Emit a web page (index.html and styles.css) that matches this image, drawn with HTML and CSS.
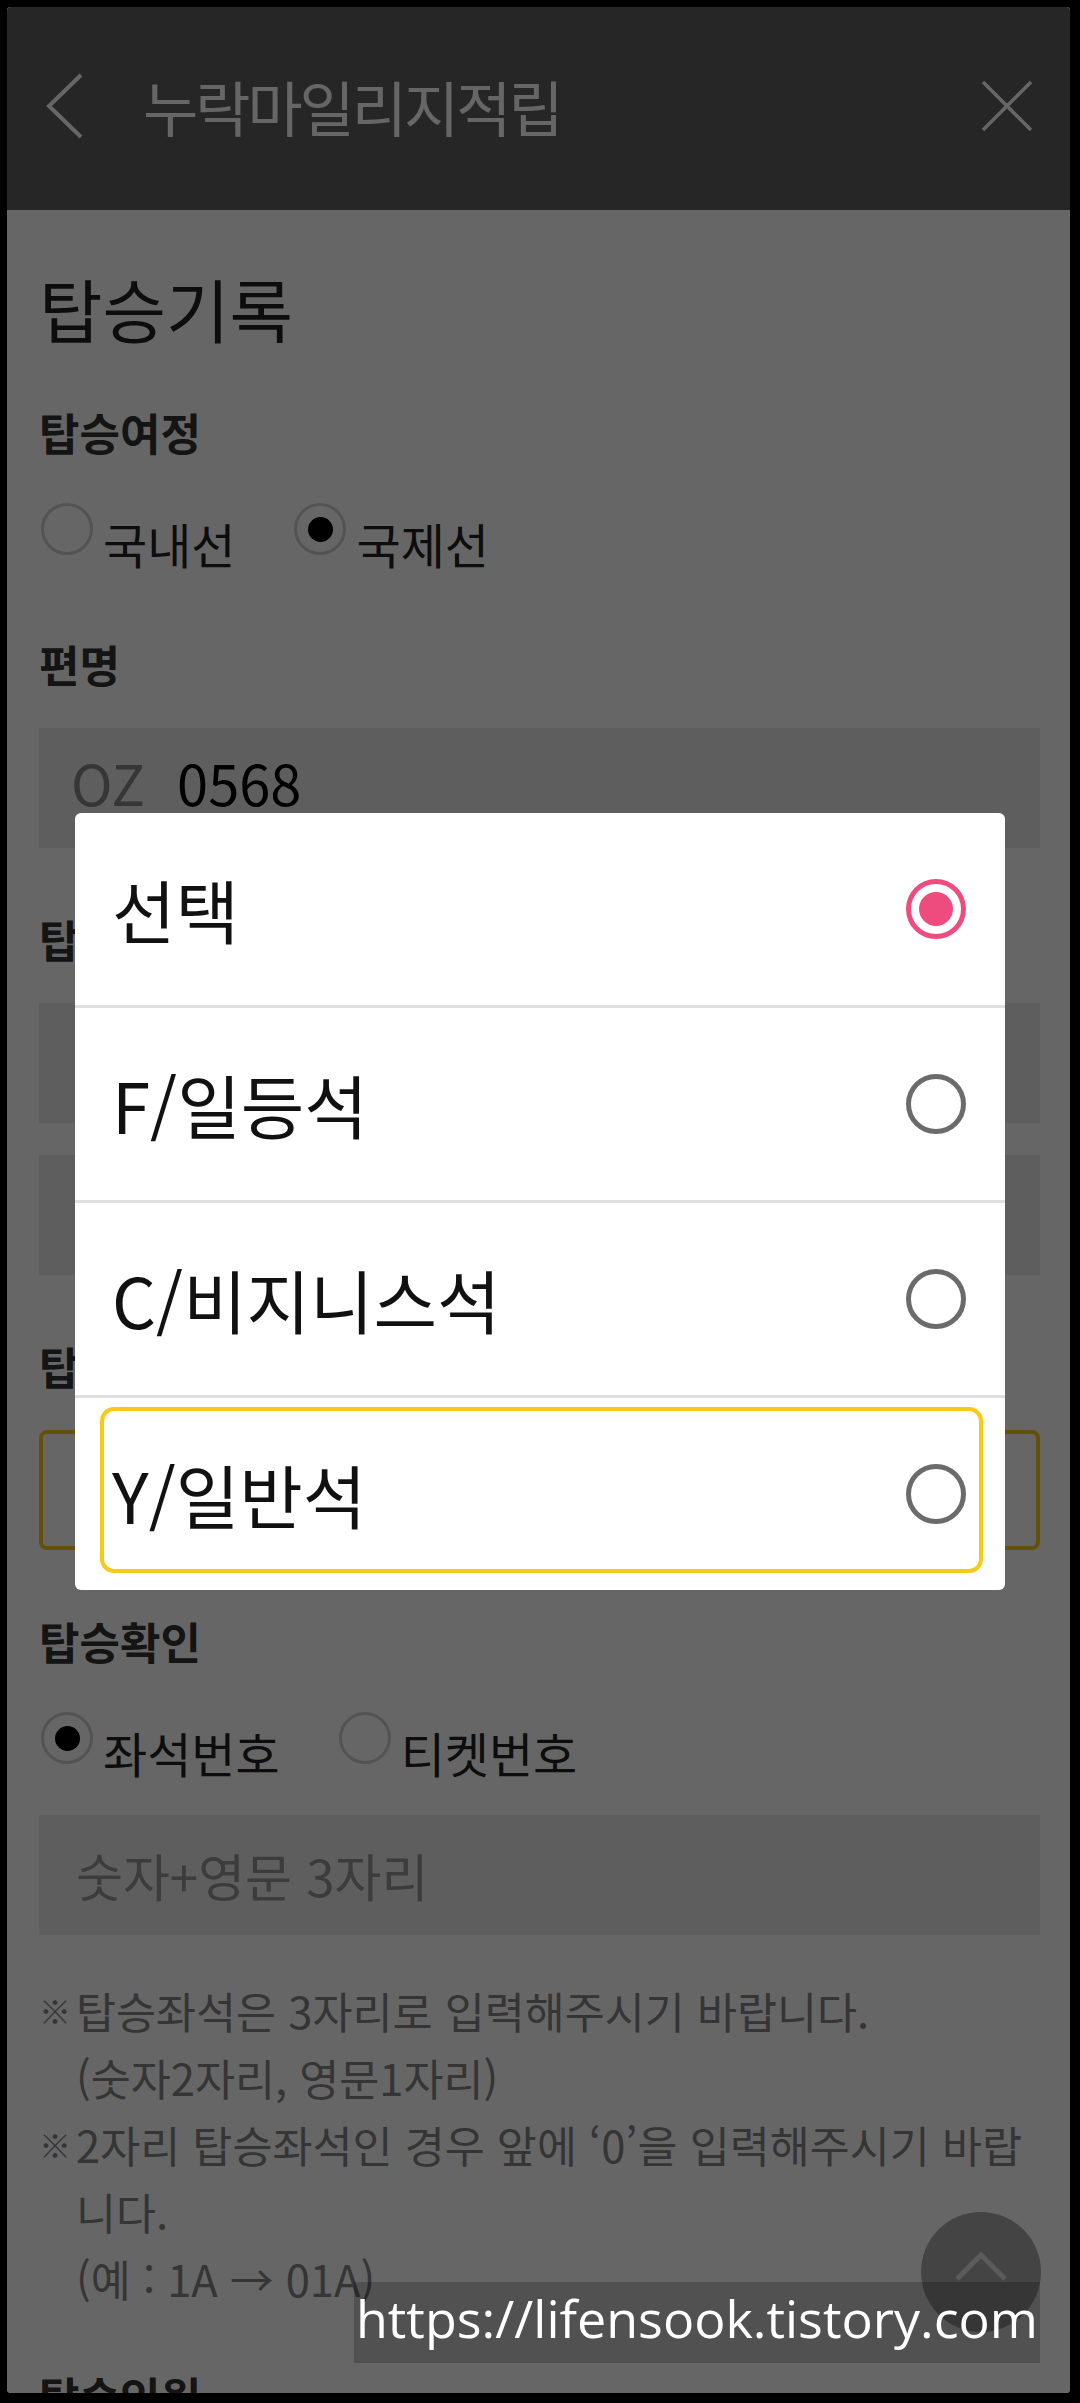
FILE: index.html
```html
<!DOCTYPE html>
<html lang="ko">
<head>
    <meta charset="UTF-8">
    <meta name="viewport" content="width=device-width, initial-scale=1.0">
    <title>누락마일리지적립</title>
    <link rel="stylesheet" href="styles.css">
</head>
<body>
    <div class="screen">
        <header class="appbar">
            <svg class="appbar-back" viewBox="0 0 38 66" width="38" height="66"><polyline points="35,2 3,33 35,64" /></svg>
            <h1 class="appbar-title">누락마일리지적립</h1>
            <svg class="appbar-close" viewBox="0 0 52 52" width="52" height="52"><path d="M2 2L50 50M50 2L2 50" /></svg>
        </header>

        <main class="content">
            <h2 class="page-title">탑승기록</h2>

            <section class="field field-first">
                <h3 class="field-label">탑승여정</h3>
                <div class="radios">
                    <label class="radio"><span class="radio-mark"></span><span class="radio-text">국내선</span></label>
                    <label class="radio checked"><span class="radio-mark"></span><span class="radio-text">국제선</span></label>
                </div>
            </section>

            <section class="field">
                <h3 class="field-label">편명</h3>
                <div class="input input-flight"><span class="input-prefix">OZ</span><span class="input-value">0568</span></div>
            </section>

            <section class="field">
                <h3 class="field-label">탑승구간</h3>
                <div class="input"></div>
                <div class="input input-second"></div>
            </section>

            <section class="field">
                <h3 class="field-label">탑승클래스</h3>
                <div class="select"></div>
            </section>

            <section class="field">
                <h3 class="field-label">탑승확인</h3>
                <div class="radios">
                    <label class="radio checked"><span class="radio-mark"></span><span class="radio-text">좌석번호</span></label>
                    <label class="radio"><span class="radio-mark"></span><span class="radio-text">티켓번호</span></label>
                </div>
                <div class="input input-placeholder">숫자+영문 3자리</div>
                <ul class="notes">
                    <li><span class="note-mark">※</span><span>탑승좌석은 3자리로 입력해주시기 바랍니다.<br>(숫자2자리, 영문1자리)</span></li>
                    <li><span class="note-mark">※</span><span>2자리 탑승좌석인 경우 앞에 ‘0’을 입력해주시기 바랍니다.<br>(예 : 1A → 01A)</span></li>
                </ul>
            </section>

            <section class="field field-last">
                <h3 class="field-label">탑승인원</h3>
            </section>
        </main>

        <button class="to-top" type="button">
            <svg viewBox="0 0 54 30" width="54" height="30"><polyline points="3,27 27,3 51,27" /></svg>
        </button>

        <div class="overlay">
            <div class="dialog">
                <div class="option selected"><span>선택</span><span class="option-mark"></span></div>
                <div class="option"><span>F/일등석</span><span class="option-mark"></span></div>
                <div class="option"><span>C/비지니스석</span><span class="option-mark"></span></div>
                <div class="option focused"><span>Y/일반석</span><span class="option-mark"></span></div>
            </div>
        </div>

        <div class="watermark">https://lifensook.tistory.com</div>
    </div>
</body>
</html>
```

FILE: styles.css
```css
:root {
    --dim: rgba(0, 0, 0, 0.6);
    --label-color: #333;
    --input-bg: #ececec;
    --accent: #ee4b7f;
    --focus: #f7c919;
}
* {
    box-sizing: border-box;
}
body {
    margin: 0;
    height: 2403px;
    overflow: hidden;
    background: #000;
    font-family: 'Noto Sans CJK KR', 'Noto Sans', sans-serif;
}
.screen {
    position: relative;
    width: 1063px;
    height: 2386px;
    margin: 7px 0 0 7px;
    background: #fff;
    border-radius: 4px;
    overflow: hidden;
}
.appbar {
    display: flex;
    align-items: center;
    height: 203px;
    padding: 0 37px 5px 39px;
    background: #5f5f5f;
}
.appbar-back {
    fill: none;
    stroke: #fff;
    stroke-width: 4;
}
.appbar-title {
    flex: 1;
    margin: 0 0 0 59px;
    font-size: 60px;
    font-weight: 400;
    line-height: 1;
    letter-spacing: -3px;
    color: #fff;
}
.appbar-close {
    fill: none;
    stroke: #fff;
    stroke-width: 3.5;
}
.content {
    padding: 58px 30px 0 32px;
}
.page-title {
    margin: 0;
    font-size: 69px;
    font-weight: 400;
    line-height: 80px;
    color: #222;
}
.field {
    margin-top: 61px;
}
.field-first {
    margin-top: 54px;
}
.field-last {
    margin-top: 54px;
}
.field-label {
    margin: 0 0 34px;
    font-size: 44px;
    font-weight: 700;
    line-height: 60px;
    color: var(--label-color);
}
.radios {
    display: flex;
    gap: 57px;
    padding-top: 7px;
    margin-bottom: 33px;
}
.radio {
    display: flex;
    align-items: flex-start;
    gap: 10px;
}
.radio-mark {
    display: flex;
    align-items: center;
    justify-content: center;
    width: 52px;
    height: 52px;
    margin-left: 2px;
    border: 3px solid #cfcfcf;
    border-radius: 50%;
}
.radio.checked .radio-mark::after {
    content: '';
    width: 25px;
    height: 25px;
    border-radius: 50%;
    background: #000;
}
.radio-text {
    margin-top: 10px;
    font-size: 48px;
    line-height: 60px;
    color: #222;
}
.input {
    display: flex;
    align-items: center;
    height: 120px;
    padding-left: 32px;
    background: var(--input-bg);
}
.input-second {
    margin-top: 32px;
}
.input-flight {
    padding-bottom: 14px;
    font-size: 56px;
}
.input-prefix {
    margin-right: 32px;
    color: #888;
}
.input-value {
    color: #000;
}
.input-placeholder {
    padding-left: 37px;
    font-size: 51px;
    color: #969696;
}
.select {
    height: 120px;
    border: 4px solid var(--focus);
    border-radius: 8px;
    background: #fff;
}
.notes {
    margin: 42px 0 0;
    padding: 0;
    list-style: none;
    font-size: 43.5px;
    line-height: 67px;
    color: #858585;
}
.notes li {
    display: flex;
}
.note-mark {
    flex: none;
    width: 37px;
    font-size: 32px;
}
.to-top {
    position: absolute;
    right: 29px;
    bottom: 61px;
    display: flex;
    align-items: center;
    justify-content: center;
    width: 120px;
    height: 120px;
    padding: 0 0 10px;
    border: 0;
    border-radius: 50%;
    background: #aaa;
}
.to-top svg {
    fill: none;
    stroke: #e4e4e4;
    stroke-width: 5;
}
.overlay {
    position: absolute;
    inset: 0;
    display: flex;
    align-items: center;
    justify-content: center;
    background: var(--dim);
}
.dialog {
    width: 930px;
    margin: 3px 0 0 3px;
    background: #fff;
    border-radius: 6px;
    overflow: hidden;
}
.option {
    position: relative;
    display: flex;
    align-items: center;
    justify-content: space-between;
    height: 195px;
    padding: 0 39px 0 37px;
    border-bottom: 3px solid #e0e0e0;
    font-size: 69px;
    color: #111;
}
.option:last-child {
    height: 192px;
    border-bottom: none;
}
.option-mark {
    flex: none;
    display: flex;
    align-items: center;
    justify-content: center;
    width: 60px;
    height: 60px;
    border: 5px solid #6b6b6b;
    border-radius: 50%;
}
.option.selected .option-mark {
    border-color: var(--accent);
}
.option.selected .option-mark::after {
    content: '';
    width: 34px;
    height: 34px;
    border-radius: 50%;
    background: var(--accent);
}
.option.focused::after {
    content: '';
    position: absolute;
    top: 9px;
    left: 25px;
    right: 22px;
    bottom: 17px;
    border: 4px solid var(--focus);
    border-radius: 14px;
}
.watermark {
    position: absolute;
    right: 30px;
    bottom: 30px;
    height: 81px;
    padding: 0 2px;
    background: rgba(0, 0, 0, 0.2);
    font-family: 'Open Sans', sans-serif;
    font-size: 52px;
    line-height: 71px;
    color: #fff;
}
```
